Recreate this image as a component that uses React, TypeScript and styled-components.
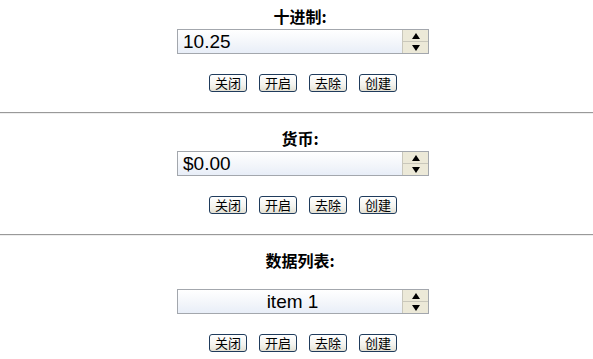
import React from "react";
import styled, { createGlobalStyle } from "styled-components";

const GlobalStyle = createGlobalStyle`
  html, body {
    margin: 0;
    padding: 0;
    background: #ffffff;
  }
  body {
    font-family: "Liberation Sans", "Noto Sans CJK SC", sans-serif;
    color: #000000;
  }
`;

interface ISection {
  spaced?: boolean;
}
interface IField {
  align?: string;
}

const Page = styled.div`
  width: 593px;
  padding-top: 8px;
`;

const Section = styled.section`
  display: flex;
  flex-direction: column;
  align-items: center;
  padding-left: 13px;
`;

const Title = styled.div<ISection>`
  font-family: "Noto Sans CJK SC", sans-serif;
  font-weight: 700;
  font-size: 16px;
  line-height: 16px;
  height: 16px;
  margin-right: 6px;
  margin-bottom: ${(props) => (props.spaced ? "21px" : "5px")};
`;

const SpinBox = styled.div`
  display: flex;
  width: 252px;
  height: 25px;
  box-sizing: border-box;
  border: 1px solid #a3a7ad;
`;

const Field = styled.div<IField>`
  flex: 1;
  display: flex;
  align-items: center;
  justify-content: ${(props) => props.align};
  padding-left: 5px;
  font-family: "Liberation Sans", Arial, sans-serif;
  font-size: 19px;
  background: linear-gradient(to bottom, #ffffff 0%, #f2f5fa 60%, #e8eef8 100%);
`;

const Spinner = styled.div`
  display: flex;
  flex-direction: column;
  width: 25px;
  border-left: 1px solid #c9c7bb;
  background: #ece9d8;
`;

const Arrow = styled.div`
  flex: 1;
  display: flex;
  align-items: center;
  justify-content: center;
  & + & {
    border-top: 1px solid #c9c7bb;
  }
`;

const ButtonRow = styled.div`
  display: flex;
  gap: 12px;
  margin-top: 20px;
`;

const Button = styled.button`
  width: 38px;
  height: 18px;
  padding: 0;
  box-sizing: border-box;
  border: 1px solid #1f3b5c;
  border-radius: 3px;
  background: linear-gradient(to bottom, #ffffff 0%, #f4f3ee 60%, #e3e0d3 100%);
  font-family: "Noto Sans CJK SC", sans-serif;
  font-size: 13px;
  line-height: 16px;
  color: #000000;
`;

const Divider = styled.hr`
  margin: 20px 0 16px;
  height: 0;
  border: none;
  border-top: 1px solid #999999;
  border-bottom: 1px solid #eeeeee;
`;

const buttons = ["关闭", "开启", "去除", "创建"];

const Up = () => (
  <svg width="8" height="6" viewBox="0 0 8 6">
    <path d="M4 0 L8 6 L0 6 Z" fill="#000" />
  </svg>
);

const Down = () => (
  <svg width="8" height="6" viewBox="0 0 8 6">
    <path d="M0 0 L8 0 L4 6 Z" fill="#000" />
  </svg>
);

const Block = ({ title, value, align, spaced }: { title: string; value: string; align: string; spaced?: boolean }) => {
  return (
    <Section>
      <Title spaced={spaced}>{title}</Title>
      <SpinBox>
        <Field align={align}>{value}</Field>
        <Spinner>
          <Arrow>
            <Up />
          </Arrow>
          <Arrow>
            <Down />
          </Arrow>
        </Spinner>
      </SpinBox>
      <ButtonRow>
        {buttons.map((b) => (
          <Button key={b}>{b}</Button>
        ))}
      </ButtonRow>
    </Section>
  );
};

export default function App() {
  return (
    <Page>
      <GlobalStyle />
      <Block title="十进制:" value="10.25" align="flex-start" />
      <Divider />
      <Block title="货币:" value="$0.00" align="flex-start" />
      <Divider />
      <Block title="数据列表:" value="item 1" align="center" spaced />
    </Page>
  );
}
